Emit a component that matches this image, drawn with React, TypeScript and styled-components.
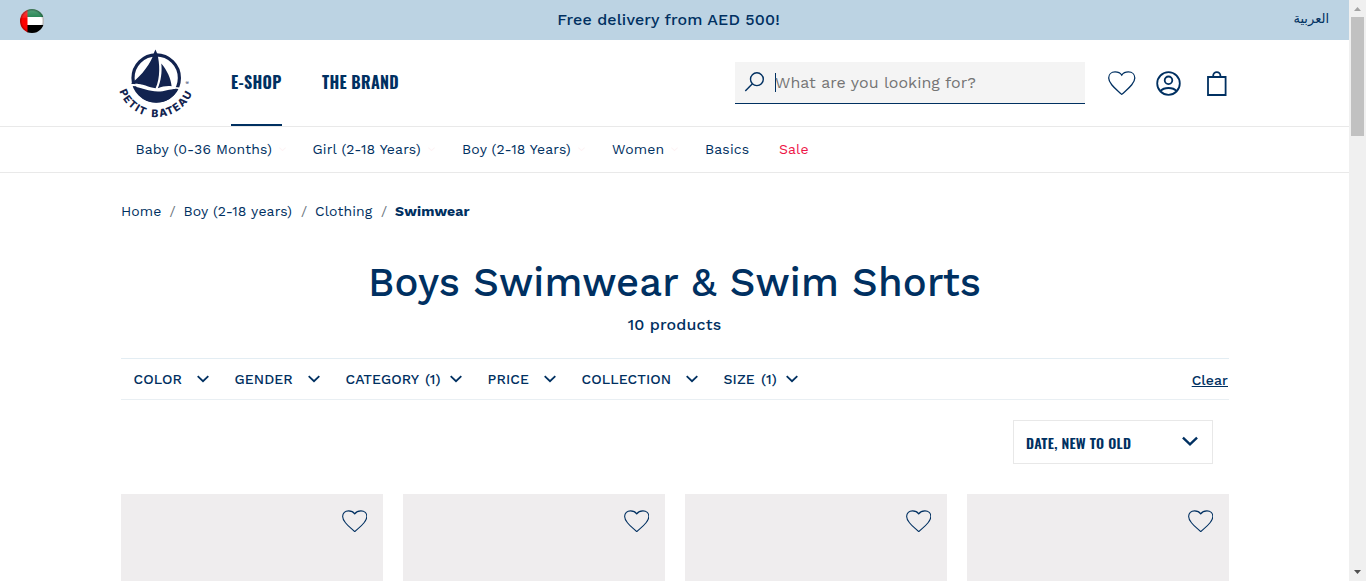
import React from 'react';
import styled, { createGlobalStyle } from 'styled-components';

const navy = '#003061';
const line = '#e9e9e9';
const sans = '"Work Sans", Inter, "Noto Sans", sans-serif';
const condensed = 'Oswald, "Roboto Condensed", Roboto, "Liberation Sans Narrow", sans-serif';

const GlobalStyle = createGlobalStyle`
  * { box-sizing: border-box; }
  body { margin: 0; background: #fff; color: ${navy}; font-family: ${sans}; overflow: hidden; }
  svg { display: block; flex: none; }
`;

const Window = styled.div`
  display: flex;
  height: 581px;
  overflow: hidden;
`;

const Page = styled.div`
  width: 1349px;
  flex: none;
  overflow: hidden;
`;

const Text = styled.span<{ $ls?: number }>`
  letter-spacing: ${(p) => p.$ls ?? 0}px;
  white-space: nowrap;
`;

const TopBar = styled.div`
  display: grid;
  grid-template-columns: 200px 1fr 200px;
  align-items: center;
  height: 40px;
  padding: 0 20px;
  background: #bcd3e3;
`;

const Announcement = styled(Text)`
  font-size: 16px;
  font-weight: 500;
  text-align: center;
  padding: 0 12px 1px 0;
`;

const Language = styled(Text)`
  font-family: "DejaVu Sans", serif;
  font-size: 13px;
  text-align: right;
  padding-bottom: 3px;
`;

const Container = styled.div`
  width: 1108px;
  margin: 0 auto 0 121px;
`;

const Header = styled.header`
  height: 87px;
  border-bottom: 1px solid ${line};
`;

const HeaderRow = styled(Container)`
  display: flex;
  height: 86px;
`;

const MainLink = styled.a<{ $active?: boolean; $width: number }>`
  width: ${(p) => p.$width}px;
  height: 86px;
  line-height: 84px;
  font-family: ${condensed};
  font-size: 16px;
  font-weight: 700;
  letter-spacing: 0.3px;
  margin-right: 40px;
  border-bottom: 2px solid ${(p) => (p.$active ? navy : 'transparent')};
  white-space: nowrap;
`;

const MainNav = styled.nav`
  display: flex;
  margin-left: 39px;
  flex: 1;
`;

const SearchBox = styled.div`
  display: flex;
  align-items: center;
  width: 350px;
  height: 42px;
  margin-top: 22px;
  padding-left: 9px;
  background: #f4f4f4;
  border-bottom: 1px solid ${navy};
`;

const Caret = styled.span`
  width: 1px;
  height: 19px;
  margin: 0 -1px 0 10px;
  background: ${navy};
`;

const Placeholder = styled(Text)`
  font-size: 16px;
  color: #757575;
`;

const Tools = styled.div`
  display: flex;
  align-items: center;
  width: 144px;
  padding: 0 0 0 23px;
`;

const SubNav = styled.nav`
  height: 46px;
  border-bottom: 1px solid ${line};
`;

const SubNavRow = styled(Container)`
  display: flex;
  padding-left: 14.5px;
`;

const SubLink = styled.a<{ $width: number; $sale?: boolean }>`
  display: flex;
  align-items: center;
  gap: 7px;
  width: ${(p) => p.$width}px;
  font-size: 14px;
  line-height: 45px;
  letter-spacing: 0.15px;
  white-space: nowrap;
  color: ${(p) => (p.$sale ? '#ee1547' : navy)};
`;

const Breadcrumb = styled(Container)`
  display: flex;
  height: 77px;
  line-height: 77px;
  font-size: 14px;
`;

const Crumb = styled(Text)<{ $width: number; $current?: boolean }>`
  width: ${(p) => p.$width}px;
  font-weight: ${(p) => (p.$current ? 700 : 400)};
`;

const Slash = styled.span`
  width: 22px;
  padding-left: 8px;
  color: #6c757d;
`;

const Title = styled.h1`
  margin: 0;
  height: 65px;
  line-height: 65px;
  font-size: 40px;
  font-weight: 500;
  letter-spacing: 0.13px;
  text-align: center;
`;

const Count = styled.p`
  margin: 0 0 23px;
  height: 20px;
  line-height: 20px;
  font-size: 16px;
  font-weight: 500;
  letter-spacing: 0.15px;
  text-align: center;
`;

const Filters = styled(Container)`
  display: flex;
  align-items: center;
  height: 42px;
  padding-left: 12.5px;
  border-top: 1px solid #e3edf3;
  border-bottom: 1px solid #e9eff3;
`;

const Filter = styled.button<{ $width: number }>`
  display: flex;
  align-items: center;
  justify-content: space-between;
  width: ${(p) => p.$width}px;
  margin: 0 26px 0 0;
  padding: 0;
  border: 0;
  background: none;
  color: ${navy};
  font-family: ${sans};
  font-size: 14px;
  font-weight: 500;
  word-spacing: 1.5px;

  svg {
    margin-bottom: 1px;
  }
`;

const Clear = styled.a`
  margin: 2px 1px 0 auto;
  font-size: 14px;
  font-weight: 500;
  letter-spacing: 0.1px;
  text-decoration: underline;
`;

const SortRow = styled(Container)`
  display: flex;
  justify-content: flex-end;
  padding: 20px 16px 30px 0;
`;

const Sort = styled.div`
  display: flex;
  align-items: center;
  justify-content: space-between;
  width: 200px;
  height: 44px;
  padding: 0 14px 0 12px;
  border: 1px solid #e8e8e8;
  font-family: ${condensed};
  font-size: 14px;
  font-weight: 600;
  line-height: 20px;

  span {
    padding-top: 2px;
  }

  svg {
    margin-bottom: 2px;
  }
`;

const Products = styled(Container)`
  display: grid;
  grid-template-columns: repeat(4, 262px);
  gap: 20px;
`;

const Product = styled.div`
  display: flex;
  justify-content: flex-end;
  height: 300px;
  padding: 15.5px 16px 0 0;
  background: #efedee;
`;

const Scrollbar = styled.div`
  display: flex;
  flex-direction: column;
  justify-content: space-between;
  align-items: center;
  width: 17px;
  height: 581px;
  background: #f0f0f0;
`;

const Thumb = styled.div`
  width: 13px;
  height: 119px;
  background: #c1c1c1;
  margin-bottom: auto;
`;

const FlagIcon = styled.svg`
  margin-top: 2px;
`;

const Flag = () => (
  <FlagIcon width="24" height="24" viewBox="0 0 24 24">
    <defs>
      <clipPath id="flag"><circle cx="12" cy="12" r="12" /></clipPath>
      <linearGradient id="shine" x1="0" y1="0" x2="0" y2="1">
        <stop offset="0" stopColor="#fff" stopOpacity=".3" />
        <stop offset=".35" stopColor="#fff" stopOpacity=".1" />
        <stop offset=".4" stopColor="#fff" stopOpacity="0" />
      </linearGradient>
      <radialGradient id="rim">
        <stop offset=".8" stopColor="#000" stopOpacity="0" />
        <stop offset="1" stopColor="#000" stopOpacity=".35" />
      </radialGradient>
    </defs>
    <g clipPath="url(#flag)">
      <path fill="#fff" d="M0 0h24v24H0z" />
      <path fill="#107a43" d="M7 0h17v8H7z" />
      <path fill="#000" d="M7 16h17v8H7z" />
      <path fill="#f00" d="M0 0h7.5v24H0z" />
      <path fill="url(#shine)" d="M0 0h24v24H0z" />
      <path fill="url(#rim)" d="M0 0h24v24H0z" />
    </g>
  </FlagIcon>
);

const Logo = () => (
  <svg width="71" height="86" viewBox="0 0 71 86" fill="#12234f" overflow="visible">
    <circle cx="35.2" cy="38" r="23.2" fill="none" stroke="#12234f" strokeWidth="3.2" />
    <path d="M34.4 9.5 36.2 13.5C38.8 23 39.5 38 34.6 48.2 27 47.5 20 42.5 9.8 43.8 21 35.5 30.5 22 32.7 13.4Z" />
    <path d="M40.3 23.5C46 30 50 39 50.6 46.2 46 45.5 41.5 46.5 36.8 48.2 40 41 41.2 32 40.3 23.5Z" />
    <path fill="#fff" d="M9 44.2C22 43 27.5 49.3 37 49.3 44 49.3 50 45.5 59 47.5L58.5 49.3C49 47.5 44 51 37 51 27 51 22 45.5 9.5 46Z" />
    <path d="M13.5 47C22 47.5 27 51.5 37 51.5 44 51.5 49 48.5 57 49 53 57.5 45 62.6 35.2 62.6 25 62.6 17.5 57 13.5 47Z" />
    <path id="arc" fill="none" d="M-2.3 49.3A39.2 39.2 0 0 0 74.4 38" />
    <text fontFamily="Inter, sans-serif" fontWeight="800" fontSize="10.5" wordSpacing="2">
      <textPath href="#arc" startOffset="2" textLength="93">PETIT BATEAU</textPath>
    </text>
    <text x="64.5" y="45" fontFamily="Inter, sans-serif" fontSize="5">®</text>
  </svg>
);

const SearchIcon = () => (
  <svg width="21" height="21" viewBox="0 0 21 21" fill="none" stroke={navy} strokeWidth="1.4">
    <circle cx="12.9" cy="7.2" r="6.4" />
    <path d="M8.4 11.7 1.3 19" />
  </svg>
);

const Heart = ({ width = 27.5, stroke = 1.3 }: { width?: number; stroke?: number }) => (
  <svg width={width} height={(width * 25) / 28} viewBox="0 0 28 25" fill="none" stroke={navy} strokeWidth={stroke}>
    <path d="M14 23.8C9.5 19.7 6.5 17.5 3.8 14 1.3 11 .7 9.3.7 7.2.7 3.5 3.4 1 7.2 1 10.3 1 12.5 2 14 4.2 15.5 2 17.7 1 20.8 1 24.6 1 27.3 3.5 27.3 7.2 27.3 9.3 26.7 11 24.2 14 21.5 17.5 18.5 19.7 14 23.8Z" />
  </svg>
);

const ToolIcon = styled.svg<{ $gap: number }>`
  margin-left: ${(p) => p.$gap}px;
`;

const UserIcon = () => (
  <ToolIcon $gap={20.5} width="25" height="25" viewBox="0 0 25 25" fill="none" stroke={navy} strokeWidth="1.8">
    <circle cx="12.5" cy="12.5" r="11.3" />
    <circle cx="12.5" cy="9.3" r="3.8" />
    <path d="M4.2 20.2C6.5 17.7 9.3 17 12.5 17S18.5 17.7 20.8 20.2" />
  </ToolIcon>
);

const BagIcon = () => (
  <ToolIcon $gap={26} width="20" height="25" viewBox="0 0 20 25" fill="none" stroke={navy} strokeWidth="1.8">
    <path d="M1 6h17.6v18H1zM6.2 6V4.8a3.6 3.6 0 0 1 7.2 0V6" />
  </ToolIcon>
);

const Chevron = ({ width = 12, color = navy }: { width?: number; color?: string }) => (
  <svg width={width} height={(width * 8) / 12} viewBox="0 0 12 8" fill="none" stroke={color} strokeWidth="1.8">
    <path d="M.7 1.2 6 6.2 11.3 1.2" />
  </svg>
);

const subLinks = [
  { label: 'Baby (0-36 Months)', width: 177, menu: true },
  { label: 'Girl (2-18 Years)', width: 149.5, menu: true },
  { label: 'Boy (2-18 Years)', width: 150, menu: true },
  { label: 'Women', width: 93, menu: true },
  { label: 'Basics', width: 74 },
  { label: 'Sale', width: 40, sale: true },
];

const crumbs = [
  { label: 'Home', width: 40.5 },
  { label: 'Boy (2-18 years)', width: 109.5 },
  { label: 'Clothing', width: 58 },
];

const filters = [
  { label: 'COLOR', width: 75 },
  { label: 'GENDER', width: 85 },
  { label: 'CATEGORY (1)', width: 116 },
  { label: 'PRICE', width: 68 },
  { label: 'COLLECTION', width: 116 },
  { label: 'SIZE (1)', width: 74 },
];

export default function App() {
  return (
    <Window>
      <GlobalStyle />
      <Page>
        <TopBar>
          <Flag />
          <Announcement $ls={0.13}>Free delivery from AED 500!</Announcement>
          <Language lang="ar" dir="rtl">العربية</Language>
        </TopBar>
        <Header>
          <HeaderRow>
            <Logo />
            <MainNav>
              <MainLink $active $width={51}>E-SHOP</MainLink>
              <MainLink $width={77}>THE BRAND</MainLink>
            </MainNav>
            <SearchBox>
              <SearchIcon />
              <Caret />
              <Placeholder>What are you looking for?</Placeholder>
            </SearchBox>
            <Tools>
              <Heart />
              <UserIcon />
              <BagIcon />
            </Tools>
          </HeaderRow>
        </Header>
        <SubNav>
          <SubNavRow>
            {subLinks.map((l) => (
              <SubLink key={l.label} $width={l.width} $sale={l.sale}>
                {l.label}
                {l.menu && <Chevron width={7} color="#fdf3f4" />}
              </SubLink>
            ))}
          </SubNavRow>
        </SubNav>
        <Breadcrumb>
          {crumbs.map((c) => (
            <React.Fragment key={c.label}>
              <Crumb $width={c.width} $ls={0.1}>{c.label}</Crumb>
              <Slash>/</Slash>
            </React.Fragment>
          ))}
          <Crumb $width={80} $current $ls={0.15}>Swimwear</Crumb>
        </Breadcrumb>
        <Title>Boys Swimwear &amp; Swim Shorts</Title>
        <Count>10 products</Count>
        <Filters>
          {filters.map((f) => (
            <Filter key={f.label} $width={f.width}>
              <Text $ls={0.1}>{f.label}</Text>
              <Chevron />
            </Filter>
          ))}
          <Clear>Clear</Clear>
        </Filters>
        <SortRow>
          <Sort>
            <Text $ls={0.28}>DATE, NEW TO OLD</Text>
            <Chevron width={16} />
          </Sort>
        </SortRow>
        <Products>
          {[0, 1, 2, 3].map((i) => (
            <Product key={i}><Heart width={25.5} stroke={1.2} /></Product>
          ))}
        </Products>
      </Page>
      <Scrollbar>
        <svg width="17" height="17" viewBox="0 0 17 17" fill="#a3a3a3"><path d="M5 11h7L8.5 7z" /></svg>
        <Thumb />
        <svg width="17" height="17" viewBox="0 0 17 17" fill="#505050"><path d="M5 6h7L8.5 10z" /></svg>
      </Scrollbar>
    </Window>
  );
}
